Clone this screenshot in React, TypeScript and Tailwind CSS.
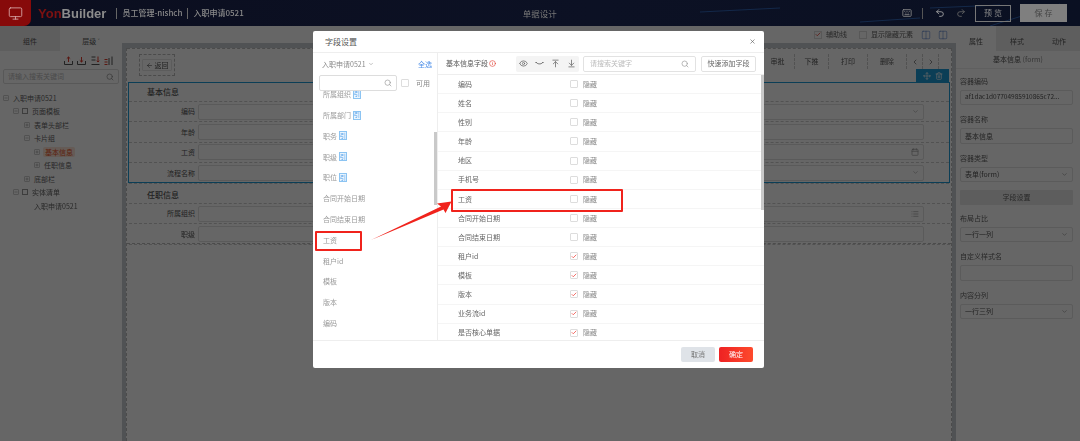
import { ArrowDownToLine, ArrowLeft, ArrowUpToLine, Calendar, Check, ChevronDown, ChevronLeft, ChevronRight, Columns2, Eye, Info, Keyboard, List, Minus, Monitor, Move, Plus, Redo2, Search, Trash2, Undo2, X } from "lucide-react";

const listItems = [
  { name: "所属组织", tag: true },
  { name: "所属部门", tag: true },
  { name: "职务", tag: true },
  { name: "职级", tag: true },
  { name: "职位", tag: true },
  { name: "合同开始日期" },
  { name: "合同结束日期" },
  { name: "工资" },
  { name: "租户id" },
  { name: "模板" },
  { name: "版本" },
  { name: "编码" },
];

const fieldRows = [
  { name: "编码" },
  { name: "姓名" },
  { name: "性别" },
  { name: "年龄" },
  { name: "地区" },
  { name: "手机号" },
  { name: "工资" },
  { name: "合同开始日期" },
  { name: "合同结束日期" },
  { name: "租户id", checked: true },
  { name: "模板", checked: true },
  { name: "版本", checked: true },
  { name: "业务流id", checked: true },
  { name: "是否核心单据", checked: true },
];

const treeRows = [
  { name: "入职申请0521", pad: "pl-[3px]", sign: "minus" },
  { name: "页面模板", pad: "pl-[13px]", sign: "minus", icon: true },
  { name: "表单头部栏", pad: "pl-[24px]", sign: "plus" },
  { name: "卡片组", pad: "pl-[24px]", sign: "minus" },
  { name: "基本信息", pad: "pl-[34px]", sign: "plus", active: true },
  { name: "任职信息", pad: "pl-[34px]", sign: "plus" },
  { name: "底部栏", pad: "pl-[24px]", sign: "plus" },
  { name: "实体清单", pad: "pl-[13px]", sign: "minus", icon: true },
  { name: "入职申请0521", pad: "pl-[33px]" },
];

function TrayIcon({ kind }: { kind: "up" | "down" | "sortDown" | "sortUp" }) {
  return (
    <svg width="9" height="9" viewBox="0 0 9 9" fill="none" strokeWidth="1">
      {kind === "up" && (
        <>
          <path d="M.5 5v3.5h8V5" stroke="#555" />
          <path d="M4.5 6V1M2.8 2.6 4.5 1l1.7 1.6" stroke="#e03a2b" />
        </>
      )}
      {kind === "down" && (
        <>
          <path d="M.5 5v3.5h8V5" stroke="#555" />
          <path d="M4.5 1v5M2.8 4.4 4.5 6l1.7-1.6" stroke="#e03a2b" />
        </>
      )}
      {kind === "sortDown" && (
        <>
          <path d="M.5 1h4M.5 4h4M.5 8.500h8" stroke="#555" />
          <path d="M7 .5V6M5.700 4.800 7 6l1.300-1.200" stroke="#e03a2b" />
        </>
      )}
      {kind === "sortUp" && (
        <>
          <path d="M.5 3.500h3M.5 6h3M.5 8.500h3" stroke="#e03a2b" />
          <path d="M5 2v7M8 .5V9" stroke="#555" />
        </>
      )}
    </svg>
  );
}

function Tree() {
  return (
    <div className="flex flex-col pt-[2px]">
      {treeRows.map((row, i) => (
        <div key={i} className={`flex h-[13.5px] items-center gap-[3px] ${row.pad}`}>
          {row.sign && (
            <span className="flex h-[6px] w-[6px] shrink-0 items-center justify-center rounded-[1px] border border-[#ccc] text-[#555]">
              {row.sign === "minus" ? <Minus size={4} /> : <Plus size={4} />}
            </span>
          )}
          {row.icon && <span className="h-[6px] w-[6px] shrink-0 border border-[#999]" />}
          <span className={row.active ? "rounded-[2px] bg-[#fde4d6] px-[2px] text-[#e8511f]" : "px-[1px] text-[#666]"}>{row.name}</span>
        </div>
      ))}
    </div>
  );
}

function LeftPanel() {
  return (
    <div className="flex w-[122px] shrink-0 flex-col bg-white text-[7px]">
      <div className="flex h-[25px] items-center text-[#555]">
        <div className="flex h-full w-[60px] items-center justify-center bg-[#ebebeb] pt-[5px]">组件</div>
        <div className="flex h-full flex-1 items-center justify-center pt-[5px]">层级 ˅</div>
      </div>
      <div className="flex h-[18px] items-center justify-end gap-[4.5px] pr-[9px]">
        <TrayIcon kind="up" />
        <TrayIcon kind="down" />
        <TrayIcon kind="sortDown" />
        <TrayIcon kind="sortUp" />
      </div>
      <div className="mx-[3px] flex h-[15px] items-center justify-between rounded-[2px] border border-[#ddd] px-[4px] text-[#bbb]">
        <span>请输入搜索关键词</span>
        <Search size={8} className="text-[#888]" />
      </div>
      <div className="mt-[5px]">
        <Tree />
      </div>
    </div>
  );
}

function FormRow({ label, icon }: { label: string; icon?: "down" | "date" | "list" }) {
  return (
    <div className="flex h-[20.4px] items-center border-b border-dashed border-[#ccc] text-[7px] text-[#555]">
      <div className="w-[69px] shrink-0 pr-[3px] text-right">{label}</div>
      <div className="flex h-[16px] w-[726px] items-center justify-end rounded-[2px] border border-[#e0e0e0] pr-[4px] text-[#999]">
        {icon === "down" && <ChevronDown size={7} />}
        {icon === "date" && <Calendar size={8} />}
        {icon === "list" && <List size={8} />}
      </div>
    </div>
  );
}

function ToolButton({ label, width }: { label: string; width: string }) {
  return <div className={`flex h-[15px] items-center justify-center border-l border-dashed border-[#ccc] text-[#555] ${width}`}>{label}</div>;
}

function Canvas() {
  return (
    <div className="flex min-w-0 flex-1 flex-col">
      <div className="flex h-[17px] items-center justify-end gap-[4px] bg-white pr-[8px] text-[7px] text-[#666]">
        <span className="flex h-[8px] w-[8px] items-center justify-center border border-[#ddd]">
          <Check size={7} strokeWidth={3} className="text-[#e0372b]" />
        </span>
        <span className="mr-[8px]">辅助线</span>
        <span className="h-[8px] w-[8px] border border-[#ddd]" />
        <span className="mr-[4px]">显示隐藏元素</span>
        <Columns2 size={10} strokeWidth={1.2} className="mr-[3px] text-[#3f6fc4]" />
        <Columns2 size={10} strokeWidth={1.2} className="text-[#3f6fc4]" />
      </div>
      <div className="flex-1 border-x-[4px] border-t-[5px] border-[#c9ccd3] bg-white">
        <div className="h-full border-x border-dashed border-[#bbb]">
          <div className="h-[196px] border-y border-dashed border-[#bbb] px-[1px] pt-[5px]">
            <div className="relative flex h-[24px] items-start justify-between pl-[11px] pr-[11px] text-[7px]">
              <div className="flex h-[22px] w-[36px] items-center justify-center border border-dashed border-[#bbb]">
                <div className="flex h-[12px] w-[30px] items-center justify-center gap-[2px] rounded-[1px] border border-[#e5e5e5] text-[#555]">
                  <ArrowLeft size={7} />
                  返回
                </div>
              </div>
              <div className="flex h-[15px] items-center">
                <ToolButton label="审批" width="w-[34px]" />
                <ToolButton label="下推" width="w-[34px]" />
                <ToolButton label="打印" width="w-[39px]" />
                <ToolButton label="删除" width="w-[39px]" />
                <div className="flex h-[15px] w-[16px] items-center justify-center border-l border-dashed border-[#ccc] text-[#555]">
                  <ChevronLeft size={8} />
                </div>
                <div className="flex h-[15px] w-[17px] items-center justify-center border-x border-dashed border-[#ccc] text-[#555]">
                  <ChevronRight size={8} />
                </div>
              </div>
              <div className="absolute right-[1px] top-[15px] flex h-[13px] w-[33px] items-center justify-center gap-[4px] bg-[#1d9bd6] text-white">
                <Move size={8} />
                <Trash2 size={8} />
              </div>
            </div>
            <div className="mt-[4px] h-[101px] border border-[#1d9bd6]">
              <div className="flex h-[19px] items-center border-b border-dashed border-[#ccc] pl-[18px] text-[8px] font-medium text-[#555]">基本信息</div>
              <FormRow label="编码" icon="down" />
              <FormRow label="年龄" />
              <FormRow label="工资" icon="date" />
              <FormRow label="流程名称" icon="down" />
            </div>
            <div className="pl-[1px]">
              <div className="mt-[4px] flex h-[17px] items-center border-b border-dashed border-[#ccc] pl-[18px] text-[8px] font-medium text-[#555]">任职信息</div>
              <FormRow label="所属组织" icon="list" />
              <FormRow label="职级" />
            </div>
          </div>
        </div>
      </div>
    </div>
  );
}

function PropField({ label, value, down, mono }: { label: string; value?: string; down?: boolean; mono?: boolean }) {
  return (
    <div className="flex h-[38.5px] flex-col">
      <div className="flex h-[17px] items-center text-[#666]">{label}</div>
      <div className={`flex h-[15.500px] items-center justify-between rounded-[2px] border border-[#e3e3e3] px-[4px] text-[#555] ${mono ? "text-[6.500px]" : ""}`}>
        <span className="truncate">{value}</span>
        {down && <ChevronDown size={7} className="text-[#888]" />}
      </div>
    </div>
  );
}

function RightPanel() {
  return (
    <div className="flex w-[124px] shrink-0 flex-col bg-white text-[7px]">
      <div className="flex h-[25px] items-center text-[#555]">
        <div className="flex h-full w-[40px] items-center justify-center pt-[5px]">属性</div>
        <div className="flex h-full flex-1 items-center justify-center bg-[#ececec] pt-[5px]">样式</div>
        <div className="flex h-full flex-1 items-center justify-center bg-[#ececec] pt-[5px]">动作</div>
      </div>
      <div className="flex h-[18px] items-center justify-center border-b border-[#eee] text-[#555]">
        基本信息&nbsp;<span className="text-[#888]">(form)</span>
      </div>
      <div className="pl-[4px] pr-[7px] pt-[3.5px]">
        <PropField label="容器编码" value="af1dac1d07704985910865c72..." mono />
        <PropField label="容器名称" value="基本信息" />
        <PropField label="容器类型" value="表单(form)" down />
        <div className="my-[1.5px] flex h-[15px] items-center justify-center rounded-[1px] bg-[#e8e8e8] text-[#666]">字段设置</div>
        <div className="h-[3.5px]" />
        <PropField label="布局占比" value="一行一列" down />
        <PropField label="自定义样式名" />
        <PropField label="内容分列" value="一行三列" down />
      </div>
    </div>
  );
}

function Header() {
  return (
    <div className="relative flex h-[26px] items-center overflow-hidden bg-[linear-gradient(90deg,#0b0e1f,#0c1124_55%,#0a1022)] text-[8px] text-[#8a8a8a]">
      <svg className="absolute right-0 top-0" width="400" height="26" fill="none" stroke="#14294a" strokeWidth="1">
        <path d="M20 12 100 8M250 8l70-3M310 26 380 4M180 22l60-4" />
      </svg>
      <div className="flex h-full w-[31px] items-center justify-center rounded-br-[7px] bg-[#870a0a] text-[#d8a8a8]">
        <Monitor size={15} strokeWidth={1.4} />
      </div>
      <div className="ml-[7px] font-['Liberation_Sans',sans-serif] text-[13px] font-bold leading-none">
        <span className="text-[#7c1111]">Yon</span>
        <span className="text-[#8c8c8c]">Builder</span>
      </div>
      <div className="ml-[10px] h-[11px] w-px bg-[#666]" />
      <span className="ml-[5px] font-medium">员工管理-nishch</span>
      <div className="ml-[5px] h-[11px] w-px bg-[#666]" />
      <span className="ml-[5px] font-medium">入职申请0521</span>
      <span className="relative ml-[279px] text-[8.500px] text-[#777]">单据设计</span>
      <div className="relative ml-auto flex items-center pr-[13px]">
        <Keyboard size={10} className="mr-[10px]" />
        <div className="mr-[12px] h-[11px] w-px bg-[#555]" />
        <Undo2 size={10} className="mr-[11px] text-[#aaa]" />
        <Redo2 size={10} className="mr-[9px] text-[#666]" />
        <div className="mr-[9px] flex h-[17px] w-[36px] items-center justify-center border border-[#777]">预 览</div>
        <div className="flex h-[18px] w-[47px] items-center justify-center bg-[#7f7f7f] text-[#444]">保 存</div>
      </div>
    </div>
  );
}

function Tick({ checked }: { checked?: boolean }) {
  return (
    <span className="flex h-[8px] w-[8px] shrink-0 items-center justify-center rounded-[1px] border border-[#ddd]">
      {checked && <Check size={7} strokeWidth={3} className="text-[#f0423a]" />}
    </span>
  );
}

function FieldDialog() {
  return (
    <div className="absolute left-[313px] top-[31px] flex h-[337px] w-[451px] flex-col rounded-[2px] bg-white text-[7px] text-[#666]">
      <div className="flex h-[22px] shrink-0 items-center justify-between border-b border-[#eee] px-[12px] pr-[8px]">
        <span className="text-[8px] text-[#555]">字段设置</span>
        <X size={7} strokeWidth={2} className="text-[#555]" />
      </div>
      <div className="flex min-h-0 flex-1">
        <div className="relative flex w-[125px] shrink-0 flex-col border-r border-[#eee]">
          <div className="flex h-[22px] shrink-0 items-center justify-between pl-[9px] pr-[5px]">
            <span className="flex items-center gap-[2px] text-[#888]">
              入职申请0521 <ChevronDown size={6} />
            </span>
            <span className="text-[#4b8ee8]">全选</span>
          </div>
          <div className="relative z-10 flex h-[16px] shrink-0 items-center gap-[4px] bg-white pl-[6px]">
            <div className="flex h-[16px] w-[78px] items-center justify-end rounded-[2px] border border-[#ddd] pr-[4px]">
              <Search size={8} className="text-[#999]" />
            </div>
            <Tick />
            <span className="ml-[3px] text-[#888]">可用</span>
          </div>
          <div className="-mt-[7px] min-h-0 flex-1 overflow-hidden pl-[10px] pt-0">
            <div className="flex flex-col">
              {listItems.map((item, i) => (
                <div key={i} className="flex h-[20.800px] items-center gap-[2px] text-[#999]">
                  {item.name}
                  {item.tag && <span className="flex h-[9px] w-[8px] items-center justify-center border border-[#8cc4f2] bg-[#eaf5fe] text-[6px] leading-none text-[#4b9be8]">引</span>}
                </div>
              ))}
            </div>
          </div>
          <div className="absolute right-0 top-[79px] h-[73px] w-[3px] bg-[#c9c9c9]" />
        </div>
        <div className="relative flex min-w-0 flex-1 flex-col">
          <div className="flex h-[22px] shrink-0 items-center border-b border-[#eee] pl-[8px]">
            <span className="flex w-[70px] items-center gap-[1px] text-[#555]">
              基本信息字段 <Info size={7} className="text-[#e0372b]" />
            </span>
            <div className="flex h-[16px] w-[63px] items-center rounded-[2px] bg-[#f4f4f4] text-[#666]">
              <span className="flex flex-1 justify-center"><Eye size={9} /></span>
              <span className="flex flex-1 justify-center">
                <svg width="9" height="9" viewBox="0 0 9 9" fill="none" stroke="currentColor" strokeWidth="1"><path d="M1 3c1 2.500 6 2.500 7 0M1 3v1M8 3v1" /></svg>
              </span>
              <span className="flex flex-1 justify-center"><ArrowUpToLine size={9} /></span>
              <span className="flex flex-1 justify-center"><ArrowDownToLine size={9} /></span>
            </div>
            <div className="ml-[4px] flex h-[16px] w-[113px] items-center justify-between rounded-[2px] border border-[#e2e2e2] px-[6px] text-[#bbb]">
              请搜索关键字
              <Search size={8} className="text-[#999]" />
            </div>
            <div className="ml-[5px] flex h-[16px] w-[55px] items-center justify-center rounded-[2px] border border-[#e2e2e2] text-[#666]">快速添加字段</div>
          </div>
          <div className="min-h-0 flex-1 overflow-hidden">
            {fieldRows.map((row, i) => (
              <div key={i} className="flex h-[19.130px] items-center border-b border-[#f5f5f5]">
                <span className="w-[132px] shrink-0 pl-[20px] text-[#666]">{row.name}</span>
                <Tick checked={row.checked} />
                <span className="ml-[5px] text-[#888]">隐藏</span>
              </div>
            ))}
          </div>
          <div className="absolute right-0 top-[22px] h-[135px] w-[3px] bg-[#c9c9c9]" />
        </div>
      </div>
      <div className="flex h-[28px] shrink-0 items-center justify-end gap-[4px] border-t border-[#eee] pr-[11px]">
        <div className="flex h-[15px] w-[34px] items-center justify-center rounded-[2px] bg-[#dfe3e8] text-[#777]">取消</div>
        <div className="flex h-[15px] w-[34px] items-center justify-center rounded-[2px] bg-[linear-gradient(90deg,#ee2223,#fe4a2c)] text-white">确定</div>
      </div>
    </div>
  );
}

export default function App() {
  return (
    <div className="relative h-[441px] w-[1080px] overflow-hidden bg-white font-['Noto_Sans_CJK_SC','Noto_Sans',sans-serif]">
      <div className="blur-[0.5px]">
        <Header />
      </div>
      <div className="flex h-[415px] blur-[0.5px]">
        <LeftPanel />
        <Canvas />
        <RightPanel />
      </div>
      {/* dim layer, the header is painted in its final colours above */}
      <div className="absolute inset-x-0 bottom-0 top-[26px] bg-black/60" />
      <div className="absolute inset-0 blur-[0.4px]">
        <FieldDialog />
        {/* annotations */}
        <div className="absolute left-[315px] top-[231px] h-[20px] w-[47px] rounded-[1px] border-2 border-[#f0231c]" />
        <div className="absolute left-[451px] top-[189px] h-[23px] w-[172px] rounded-[1px] border-2 border-[#f0231c]" />
        <svg className="absolute left-[365px] top-[195px]" width="92" height="50" viewBox="365 195 92 50" fill="#f0231c">
          <polygon points="371,240 441,206.500 437,203.500 451.500,201.500 445.500,213 443.500,209.500" />
        </svg>
      </div>
    </div>
  );
}
